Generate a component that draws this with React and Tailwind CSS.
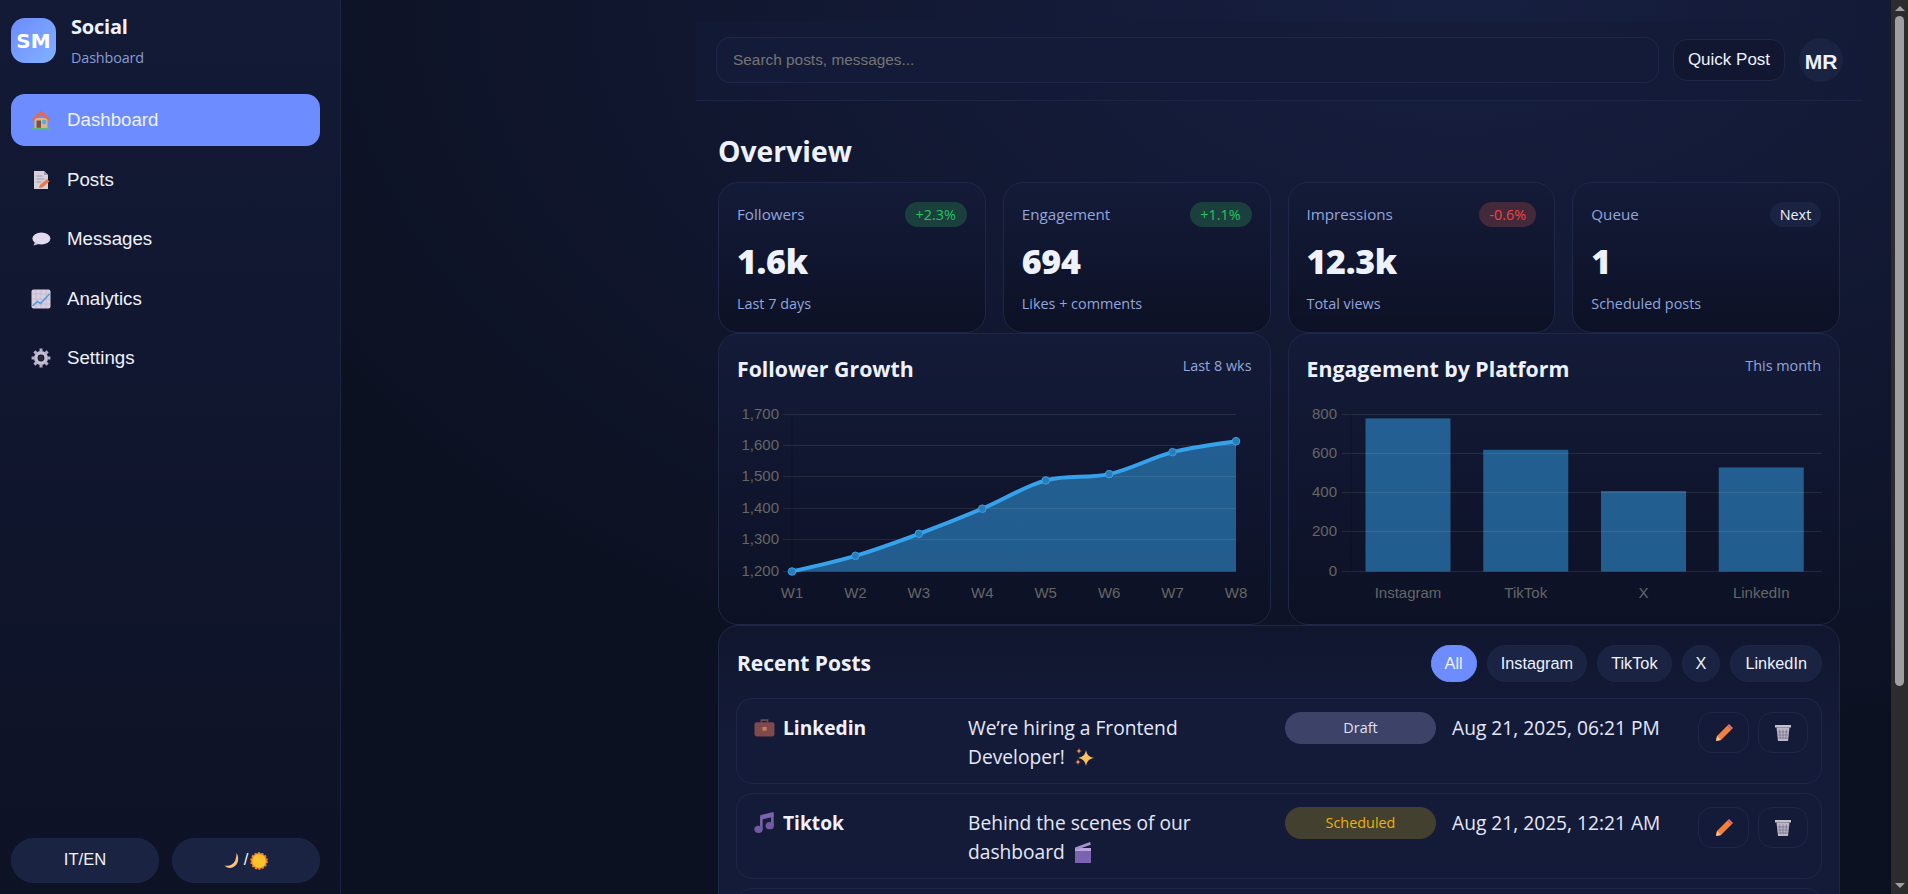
import React from "react";

const sans = "font-['Open_Sans','Noto_Sans',sans-serif]";

const House = () => (
  <svg width="20" height="20" viewBox="0 0 20 20">
    <rect x="1" y="17.800" width="18" height="1.800" fill="#5bb974" />
    <path d="M3.500 8h13v10h-13z" fill="#d9b48f" />
    <path d="M10 .8 .8 9.200l1 1.800L10 4.600l8.200 6.400 1-1.800z" fill="#e8694a" />
    <path d="M10 .8 3.500 6.700v2.500L10 4.400l6.500 4.800V6.700z" fill="#e8694a" />
    <rect x="5.500" y="10.500" width="4.500" height="7.300" fill="#7d4f3c" />
    <circle cx="13.200" cy="12" r="2.200" fill="#3fb4e8" />
  </svg>
);
const Memo = () => (
  <svg width="20" height="20" viewBox="0 0 20 20">
    <path d="M3 1h10l4 4v14H3z" fill="#d8d0dc" />
    <path d="M13 1l4 4h-4z" fill="#a89fb0" />
    <path d="M5.500 6h6M5.500 9h8M5.500 12h5" stroke="#a59cab" strokeWidth="1" />
    <path d="M8 18l1-3 7-6 2.500 2.500-7 6z" fill="#f0783c" />
  </svg>
);
const Balloon = () => (
  <svg width="20" height="20" viewBox="0 0 20 20">
    <ellipse cx="10.400" cy="9.600" rx="9" ry="6" fill="#e4daf0" />
    <path d="M4 13l-1.500 3.400L8 15z" fill="#cfc2e0" />
  </svg>
);
const ChartUp = () => (
  <svg width="20" height="20" viewBox="0 0 20 20">
    <rect x="0.500" y="0.500" width="19" height="19" rx="2" fill="#d8d0e2" />
    <path d="M5 1v18M10 1v18M15 1v18M1 5h18M1 10h18M1 15h18" stroke="#b9aec8" strokeWidth=".6" />
    <path d="M1.500 17l5-4.500 3 2L18.500 5" fill="none" stroke="#4a9bd8" strokeWidth="1.400" />
  </svg>
);
const Gear = () => (
  <svg width="20" height="20" viewBox="0 0 20 20">
    <circle cx="10" cy="10" r="5.200" fill="none" stroke="#c8c0d0" strokeWidth="3.600" />
    <path d="M10 .6v3.600M10 15.800v3.600M.6 10h3.600M15.800 10h3.600M3.400 3.400l2.500 2.500M14.100 14.100l2.500 2.500M16.600 3.400l-2.500 2.500M5.900 14.100l-2.500 2.500" stroke="#b5accb" strokeWidth="3" />
    <circle cx="10" cy="10" r="2.600" fill="#2a2a38" />
  </svg>
);
const Moon = () => (
  <svg width="18" height="18" viewBox="0 0 18 18">
    <path d="M12.500 1c3 4.500 2 11.500-3 14-3.500 1.800-7 .8-9-1.500 4.500 1 8.500-.5 10.500-4.500 1-2.500 1.500-5.500 1.500-8z" fill="#f8c27e" />
  </svg>
);
const Sun = () => (
  <svg width="18" height="18" viewBox="0 0 18 18">
    <circle cx="9" cy="9" r="7.900" fill="#f0852d" stroke="#f0852d" strokeWidth="1.800" strokeDasharray="2 1.600" />
    <circle cx="9" cy="9" r="6.800" fill="#fcc22c" />
  </svg>
);
const Briefcase = () => (
  <svg width="21" height="21" viewBox="0 0 20 20">
    <path d="M7 5V3h6v2" fill="none" stroke="#6a4a4f" strokeWidth="1.500" />
    <rect x="0.500" y="5" width="19" height="13.500" rx="2" fill="#7f4a4e" />
    <rect x="8" y="9.500" width="4" height="3.500" fill="#c98054" />
  </svg>
);
const Music = () => (
  <svg width="21" height="21" viewBox="0 0 20 20">
    <path d="M6 3l12.500-3v4.500L6 7.500z" fill="#7b63ad" />
    <path d="M7 4v12.500M17.500 1v11.500" stroke="#7b63ad" strokeWidth="2.400" />
    <ellipse cx="4.300" cy="16.500" rx="4" ry="3.500" fill="#7059a0" />
    <ellipse cx="15" cy="13" rx="4" ry="3.500" fill="#7059a0" />
  </svg>
);
const Sparkles = () => (
  <svg width="21" height="21" viewBox="0 0 21 21" className="inline-block align-[-4px] ml-[4px]">
    <path d="M12 3c1 5 3 7 8 8-5 1-7 3-8 8-1-5-3-7-8-8 5-1 7-3 8-8z" fill="#fcc05e" />
    <path d="M5 1c.4 2 1 2.600 3 3-2 .4-2.600 1-3 3-.4-2-1-2.600-3-3 2-.4 2.600-1 3-3zM4 12c.4 2 1 2.600 3 3-2 .4-2.600 1-3 3-.4-2-1-2.600-3-3 2-.4 2.600-1 3-3z" fill="#f38d45" />
  </svg>
);
const Clapper = () => (
  <svg width="20" height="23" viewBox="0 0 20 23" className="inline-block align-[-5px] ml-[3px]">
    <rect x="2" y="9" width="16" height="13" fill="#7a64b0" />
    <rect x="2" y="7" width="16" height="3" fill="#b9a5de" />
    <path d="M2 6.500 17 1l.9 2.800L3 9z" fill="#a48fd0" />
  </svg>
);
const Pencil = () => (
  <svg width="18" height="18" viewBox="0 0 18 18">
    <path d="M1 17l1-5L12.500 1.500l4 4L6 16z" fill="#f5803e" />
    <path d="M12.500 1.500 14 0l4 4-1.500 1.500z" fill="#ef6b7a" />
    <path d="M1 17l1-5 4 4z" fill="#e9c6a0" />
  </svg>
);
const Trash = () => (
  <svg width="18" height="18" viewBox="0 0 18 18">
    <rect x="1" y="1" width="16" height="2.500" fill="#c5c0cf" />
    <path d="M2.500 3.500h13L14 17H4z" fill="#bbb5c6" />
    <path d="M5.500 5.500 6.300 15M9 5.500V15M12.500 5.500 11.700 15M3.500 8h11M4 11h10M4.300 14h9.400" stroke="#726d82" strokeWidth=".7" />
  </svg>
);

const nav = [
  ["Dashboard", House, true],
  ["Posts", Memo],
  ["Messages", Balloon],
  ["Analytics", ChartUp],
  ["Settings", Gear],
];

function Sidebar() {
  return (
    <aside className="w-[341px] h-full shrink-0 flex flex-col border-r border-[#1c2444] bg-[linear-gradient(180deg,#131a36,#0d1225)] pl-[11px] pr-[20px] pt-[18px] pb-[11px]">
      <div className="flex gap-[15px] h-[76px]">
        <div className="w-[45px] h-[45px] rounded-[14px] bg-[linear-gradient(135deg,#6c8cff,#82b1ff)] flex items-center justify-center text-white text-[20px] font-extrabold font-['DejaVu_Sans',sans-serif]">
          SM
        </div>
        <div className={sans}>
          <div className="text-[20px] leading-[20px] font-bold text-[#eef1ff] tracking-[-0.01em] mt-[-1px]">Social</div>
          <div className="text-[14.400px] leading-[20px] text-[#8a9bd4] mt-[11px] tracking-[-0.01em]">Dashboard</div>
        </div>
      </div>
      <nav className="flex flex-col gap-[7.600px]">
        {nav.map(([label, Icon, active]) => (
          <div
            key={label}
            className={`h-[52px] flex items-center gap-[16px] pl-[20px] rounded-[14px] text-[18.700px] font-['Liberation_Sans',sans-serif] text-[#eef1ff] ${active ? "bg-[#6c8cff]" : ""}`}
          >
            <span className="w-[20px] h-[20px] flex"><Icon /></span>
            {label}
          </div>
        ))}
      </nav>
      <div className="mt-auto flex gap-[13px] font-['Liberation_Sans',sans-serif] text-[16.600px] text-[#eef1ff]">
        <div className="w-[148px] h-[45px] rounded-full bg-[#1a2342] border border-[#1c2648] flex items-center justify-center">IT/EN</div>
        <div className="w-[148px] h-[45px] rounded-full bg-[#1a2342] border border-[#1c2648] flex items-center justify-center gap-[2px]">
          <Moon />/<Sun />
        </div>
      </div>
    </aside>
  );
}

const stats = [
  ["Followers", "+2.3%", "1.6k", "Last 7 days", "g"],
  ["Engagement", "+1.1%", "694", "Likes + comments", "g"],
  ["Impressions", "-0.6%", "12.3k", "Total views", "r"],
  ["Queue", "Next", "1", "Scheduled posts", "n"],
];
const badge = {
  g: "bg-[#1a3f3d] text-[#22c55e] w-[62px]",
  r: "bg-[#43293a] text-[#ef4444] w-[57px]",
  n: "bg-[#1a2342] text-[#eef1ff] w-[51px]",
};

function StatCard({ s }) {
  return (
    <div className="h-[151px] rounded-[20px] border border-[#1e2747] bg-[linear-gradient(180deg,#141b38,#0c1125)] px-[18px] pt-[19px]">
      <div className="flex justify-between items-center h-[25px]">
        <span className="text-[15.200px] text-[#93a5dc]">{s[0]}</span>
        <span className={`h-[25px] text-center rounded-full text-[14.400px] leading-[25px] ${badge[s[4]]}`}>{s[1]}</span>
      </div>
      <div className="text-[34px] leading-[44px] font-extrabold text-[#eef1ff] mt-[12px] tracking-[-0.01em]">{s[2]}</div>
      <div className="text-[14.400px] leading-[20px] text-[#93a5dc] mt-[11px]">{s[3]}</div>
    </div>
  );
}

function smooth(p) {
  let d = `M${p[0][0]},${p[0][1]}`;
  const t = 0.17;
  for (let i = 0; i < p.length - 1; i++) {
    const a = p[i - 1] || p[i], b = p[i], c = p[i + 1], e = p[i + 2] || c;
    d += ` C${b[0] + (c[0] - a[0]) * t},${b[1] + (c[1] - a[1]) * t} ${c[0] - (e[0] - b[0]) * t},${c[1] - (e[1] - b[1]) * t} ${c[0]},${c[1]}`;
  }
  return d;
}

function LineChart() {
  const vals = [1200, 1250, 1320, 1400, 1490, 1510, 1580, 1615];
  const X0 = 73, Y0 = 237.500, W = 444, H = 157;
  const pts = vals.map((v, i) => [X0 + (i * W) / 7, Y0 - ((v - 1200) / 500) * H]);
  const line = smooth(pts);
  return (
    <svg width="550" height="270" className="block" fontFamily="Liberation Sans, sans-serif" fontSize="15" fill="#666">
      <path d={`${line} L${X0 + W},${Y0} L${X0},${Y0} Z`} fill="#36a2eb" fillOpacity=".52" stroke="none" />
      {[1700, 1600, 1500, 1400, 1300, 1200].map((v, i) => {
        const y = Math.round(Y0 - H + (i * H) / 5);
        return (
          <g key={v}>
            <line x1={X0 - 9} x2={X0 + W} y1={y - 0.5} y2={y - 0.5} stroke="#ffffff" strokeOpacity=".09" />
            <text x={X0 - 13} y={y + 4} textAnchor="end">{v.toLocaleString("en-US")}</text>
          </g>
        );
      })}
      <line x1={X0} x2={X0} y1={Y0 - H} y2={Y0} stroke="#000" strokeOpacity=".2" />
      <path d={line} fill="none" stroke="#36a2eb" strokeWidth="4" />
      {pts.map((p, i) => (
        <g key={i}>
          <circle cx={p[0]} cy={p[1]} r="3.800" fill="#2a7cb8" stroke="#36a2eb" strokeWidth="1" />
          <text x={p[0]} y={Y0 + 26} textAnchor="middle">{`W${i + 1}`}</text>
        </g>
      ))}
    </svg>
  );
}

function BarChart() {
  const rows = [["Instagram", 780], ["TikTok", 620], ["X", 410], ["LinkedIn", 530]];
  const X0 = 62, Y0 = 237.500, W = 471, H = 157, bw = 85, step = 117.750;
  return (
    <svg width="550" height="270" className="block" fontFamily="Liberation Sans, sans-serif" fontSize="15" fill="#666">
      {rows.map((r, i) => {
        const h = (r[1] / 800) * H;
        return <rect key={r[0]} x={X0 + 14.500 + i * step} y={Y0 - h} width={bw} height={h} fill="#36a2eb" fillOpacity=".52" />;
      })}
      {[800, 600, 400, 200, 0].map((v, i) => {
        const y = Math.round(Y0 - H + (i * H) / 4);
        return (
          <g key={v}>
            <line x1={X0 - 9} x2={X0 + W} y1={y - 0.5} y2={y - 0.5} stroke="#ffffff" strokeOpacity=".09" />
            <text x={X0 - 14} y={y + 4} textAnchor="end">{v}</text>
          </g>
        );
      })}
      <line x1={X0} x2={X0} y1={Y0 - H} y2={Y0} stroke="#000" strokeOpacity=".2" />
      {rows.map((r, i) => (
        <text key={r[0]} x={X0 + 14.500 + bw / 2 + i * step} y={Y0 + 26} textAnchor="middle">{r[0]}</text>
      ))}
    </svg>
  );
}

function ChartCard({ title, sub, children }) {
  return (
    <div className="h-[292px] rounded-[20px] border border-[#1e2747] bg-[linear-gradient(180deg,#141b38,#0c1125)] overflow-hidden">
      <div className="flex justify-between items-start px-[18px] pt-[21px] h-[63px]">
        <span className="text-[21.300px] leading-[28px] font-bold text-[#eef1ff]">{title}</span>
        <span className="text-[14.400px] leading-[20px] mt-[1px] text-[#93a5dc]">{sub}</span>
      </div>
      <div className="-mt-[63px]">{children}</div>
    </div>
  );
}

function Post({ icon: Icon, name, text, status, statusCls, date }) {
  return (
    <div className="grid grid-cols-[198px_301px_151px_230px_110px] gap-x-4 h-[86px] rounded-[16px] border border-[#1e2747] bg-[#141b38] pl-[17px] pt-[13px] shrink-0">
      <div className="flex items-start gap-[8px] text-[19.200px] leading-[29px] font-bold text-[#eef1ff] mt-[1px]">
        <span className="w-[21px] mt-[4px] flex"><Icon /></span>
        {name}
      </div>
      <div className="text-[19.200px] leading-[29px] text-[#e4e8fb] mt-[1px]">{text}</div>
      <div className={`h-[32px] rounded-full text-[14.400px] leading-[32px] text-center ${statusCls}`}>{status}</div>
      <div className="text-[19.200px] leading-[29px] text-[#e4e8fb] whitespace-nowrap mt-[1px]">{date}</div>
      <div className="flex gap-[9px] items-start">
        <div className="w-[51px] h-[41px] rounded-[14px] border border-[#1e2747] flex items-center justify-center"><Pencil /></div>
        <div className="w-[50px] h-[41px] rounded-[14px] border border-[#1e2747] flex items-center justify-center"><Trash /></div>
      </div>
    </div>
  );
}

const filters = ["All", "Instagram", "TikTok", "X", "LinkedIn"];

function Main() {
  return (
    <main className={`flex-1 min-w-0 h-full overflow-hidden pl-[355px] pr-[29px] pt-[21px] ${sans} bg-[#0c1122] bg-[radial-gradient(1300px_760px_at_72%_0%,#171f41,#0c1122)]`}>
      <header className="h-[80px] flex items-center gap-[14px] pl-[20px] pr-[19px] pb-[1px] border-b border-[#1c2444] bg-[#141b38]/70">
        <div className="flex-1 h-[46px] rounded-[14px] border border-[#1e2747] bg-[#141b38] px-[16px] flex items-center font-['Liberation_Sans',sans-serif] text-[15.400px] text-[#757575]">
          Search posts, messages...
        </div>
        <div className="w-[112px] h-[42px] rounded-[14px] border border-[#1e2747] bg-[#111730] flex items-center justify-center font-['Liberation_Sans',sans-serif] text-[17px] text-[#eef1ff]">
          Quick Post
        </div>
        <div className="w-[44px] h-[44px] rounded-full bg-[#1a2342] flex items-center justify-center pt-[3px] font-['Liberation_Sans',sans-serif] font-bold text-[21px] text-[#eef1ff]">
          MR
        </div>
      </header>
      <div className="px-[22px]">
        <h1 className="text-[28.300px] leading-[36px] font-bold text-[#eef1ff] mt-[32px] mb-[13px]">Overview</h1>
        <div className="grid grid-cols-4 gap-x-[17px]">
          {stats.map((s) => <StatCard key={s[0]} s={s} />)}
        </div>
        <div className="grid grid-cols-2 gap-x-[17px]">
          <ChartCard title="Follower Growth" sub="Last 8 wks"><LineChart /></ChartCard>
          <ChartCard title="Engagement by Platform" sub="This month"><BarChart /></ChartCard>
        </div>
        <section className="h-[400px] rounded-[20px] border border-[#1e2747] bg-[linear-gradient(180deg,#10162e,#141b38_110px)] px-[17px] pt-[19px] flex flex-col">
          <div className="flex justify-between items-center h-[37px] mb-[16px]">
            <h2 className="text-[21px] font-bold text-[#eef1ff] ml-[1px]">Recent Posts</h2>
            <div className="flex gap-[10px] font-['Liberation_Sans',sans-serif] text-[16.300px] text-[#eef1ff]">
              {filters.map((f, i) => (
                <span key={f} className={`h-[37px] leading-[35px] rounded-full border ${i === 4 ? "px-[14px]" : "px-[13px]"} ${i === 0 ? "bg-[#6c8cff] border-[#6c8cff]" : "bg-[#1a2342] border-[#1c2648]"}`}>{f}</span>
              ))}
            </div>
          </div>
          <div className="flex flex-col gap-[9px]">
            <Post icon={Briefcase} name="Linkedin" text={<>We’re hiring a Frontend Developer! <Sparkles /></>} status="Draft" statusCls="bg-[#3d4268] text-[#dfe3f7]" date="Aug 21, 2025, 06:21 PM" />
            <Post icon={Music} name="Tiktok" text={<>Behind the scenes of our dashboard <Clapper /></>} status="Scheduled" statusCls="bg-[#44402f] text-[#eab308]" date="Aug 21, 2025, 12:21 AM" />
            <div className="h-[86px] rounded-[16px] border border-[#1e2747] bg-[#141b38] shrink-0" />
          </div>
        </section>
      </div>
    </main>
  );
}

function Scrollbar() {
  return (
    <div className="w-[17px] h-full shrink-0 bg-[#2c2c2c] flex flex-col items-center">
      <div className="h-[17px] flex items-center"><div className="w-0 h-0 border-x-[5px] border-x-transparent border-b-[5px] border-b-[#9f9f9f]" /></div>
      <div className="w-[9px] h-[670px] rounded-full bg-[#9f9f9f] mt-[-1px]" />
      <div className="mt-auto h-[17px] flex items-center"><div className="w-0 h-0 border-x-[5px] border-x-transparent border-t-[5px] border-t-[#9f9f9f]" /></div>
    </div>
  );
}

export default function App() {
  return (
    <div className="w-full h-screen overflow-hidden flex bg-[#0c1122]">
      <Sidebar />
      <Main />
      <Scrollbar />
    </div>
  );
}
